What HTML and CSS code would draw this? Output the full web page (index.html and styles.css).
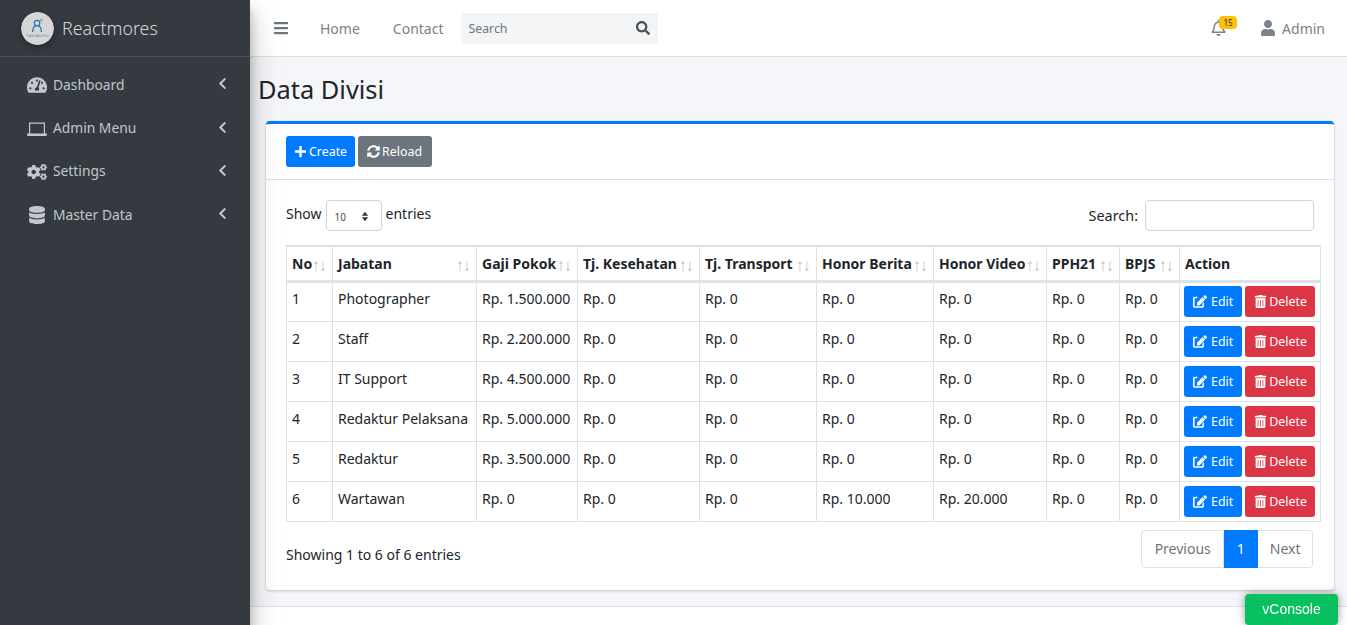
FILE: index.html
```html
<!DOCTYPE html>
<html lang="en">

<head>
    <meta charset="UTF-8">
    <meta name="viewport" content="width=device-width, initial-scale=1.0">
    <title>Data Divisi</title>
    <link rel="stylesheet" href="styles.css">
</head>

<body>
    <svg class="sprite" aria-hidden="true">
        <symbol id="i-gauge" viewBox="0 0 576 512"><path d="M288 32C128.94 32 0 160.94 0 320c0 52.8 14.25 102.26 39.06 144.8 5.61 9.62 16.3 15.2 27.44 15.2h443c11.14 0 21.83-5.58 27.44-15.2C561.75 422.26 576 372.8 576 320c0-159.06-128.94-288-288-288zm0 64c14.71 0 26.58 10.13 30.32 23.65-1.11 2.26-2.64 4.23-3.45 6.67l-9.22 27.67c-5.13 3.49-10.97 6.01-17.64 6.01-17.67 0-32-14.33-32-32S270.33 96 288 96zM96 384c-17.67 0-32-14.33-32-32s14.33-32 32-32 32 14.33 32 32-14.33 32-32 32zm48-160c-17.67 0-32-14.33-32-32s14.33-32 32-32 32 14.33 32 32-14.33 32-32 32zm246.77-72.41l-61.33 184C343.13 347.33 352 364.54 352 384c0 11.72-3.38 22.55-8.88 32H232.88c-5.5-9.45-8.88-20.28-8.88-32 0-33.94 26.5-61.43 59.9-63.59l61.34-184.01c4.17-12.56 17.73-19.45 30.36-15.17 12.57 4.19 19.35 17.79 15.17 30.36zm14.66 57.2l15.52-46.55c3.47-1.29 7.13-2.23 11.05-2.23 17.67 0 32 14.33 32 32s-14.33 32-32 32c-11.38-.01-20.89-6.28-26.57-15.22zM480 384c-17.67 0-32-14.33-32-32s14.33-32 32-32 32 14.33 32 32-14.33 32-32 32z"/></symbol>
        <symbol id="i-laptop" viewBox="0 0 20 18"><path d="M2 2.500h16v11h-1.200V3.700H3.200v9.800H2zM0 13.500h20v1c0 .8-.7 1.500-1.500 1.500h-17C.7 16 0 15.300 0 14.500z"/></symbol>
        <symbol id="i-cogs" viewBox="0 0 640 512"><path d="M512.1 191l-8.2 14.3c-3 5.3-9.4 7.5-15.1 5.4-11.8-4.4-22.6-10.7-32.1-18.6-4.6-3.8-5.8-10.5-2.8-15.7l8.2-14.3c-6.9-8-12.3-17.3-15.9-27.4h-16.5c-6 0-11.2-4.3-12.2-10.3-2-12-2.1-24.6 0-37.1 1-6 6.2-10.4 12.2-10.4h16.5c3.6-10.1 9-19.4 15.9-27.4l-8.2-14.3c-3-5.2-1.9-11.9 2.8-15.7 9.5-7.9 20.4-14.2 32.1-18.6 5.7-2.1 12.1.1 15.1 5.4l8.2 14.3c10.5-1.9 21.2-1.9 31.7 0L552 6.3c3-5.3 9.4-7.5 15.1-5.4 11.8 4.4 22.6 10.7 32.1 18.6 4.6 3.8 5.8 10.5 2.8 15.7l-8.2 14.3c6.9 8 12.3 17.3 15.9 27.4h16.5c6 0 11.2 4.3 12.2 10.3 2 12 2.1 24.6 0 37.1-1 6-6.2 10.4-12.2 10.4h-16.5c-3.6 10.1-9 19.4-15.9 27.4l8.2 14.3c3 5.2 1.9 11.9-2.8 15.7-9.5 7.9-20.4 14.2-32.1 18.6-5.7 2.1-12.1-.1-15.1-5.4l-8.2-14.3c-10.4 1.9-21.2 1.9-31.7 0zm-10.5-58.800c38.5 29.600 82.400-14.300 52.800-52.800-38.500-29.700-82.400 14.300-52.800 52.800zM386.300 286.100l33.700 16.800c10.100 5.800 14.500 18.100 10.500 29.100-8.900 24.200-26.400 46.400-42.600 65.800-7.400 8.900-20.200 11.100-30.300 5.300l-29.100-16.800c-16 13.700-34.600 24.600-54.900 31.700v33.600c0 11.600-8.300 21.600-19.700 23.600-24.600 4.200-50.400 4.400-75.900 0-11.500-2-20-11.900-20-23.600V418c-20.300-7.200-38.900-18-54.900-31.700L74 403c-10 5.800-22.900 3.600-30.300-5.300-16.200-19.400-33.300-41.600-42.200-65.700-4-10.900.4-23.200 10.500-29.100l33.300-16.800c-3.900-20.900-3.900-42.400 0-63.400L12 205.800c-10.100-5.800-14.600-18.100-10.500-29 8.900-24.200 26-46.400 42.200-65.800 7.400-8.900 20.200-11.100 30.300-5.300l29.100 16.800c16-13.700 34.600-24.600 54.900-31.700V57.100c0-11.500 8.200-21.500 19.600-23.500 24.600-4.200 50.500-4.400 76-.1 11.500 2 20 11.900 20 23.600v33.600c20.300 7.200 38.900 18 54.900 31.700l29.100-16.800c10-5.800 22.900-3.600 30.300 5.300 16.200 19.400 33.200 41.600 42.100 65.800 4 10.900.1 23.200-10 29.100l-33.700 16.800c3.900 21 3.900 42.500 0 63.500zm-117.600 21.100c59.200-77-28.700-164.900-105.700-105.700-59.200 77 28.700 164.900 105.700 105.700zm243.400 182.700l-8.200 14.300c-3 5.300-9.400 7.500-15.100 5.400-11.800-4.400-22.600-10.700-32.100-18.600-4.600-3.800-5.800-10.500-2.800-15.700l8.200-14.300c-6.900-8-12.300-17.300-15.900-27.400h-16.500c-6 0-11.200-4.300-12.200-10.300-2-12-2.100-24.600 0-37.100 1-6 6.200-10.400 12.200-10.400h16.500c3.600-10.100 9-19.400 15.900-27.400l-8.200-14.300c-3-5.200-1.900-11.900 2.800-15.700 9.500-7.900 20.400-14.200 32.100-18.600 5.700-2.100 12.100.1 15.100 5.400l8.200 14.300c10.500-1.900 21.200-1.900 31.700 0l8.200-14.300c3-5.300 9.400-7.500 15.100-5.400 11.800 4.400 22.600 10.700 32.100 18.600 4.600 3.800 5.800 10.500 2.800 15.700l-8.200 14.300c6.900 8 12.300 17.300 15.900 27.400h16.500c6 0 11.200 4.300 12.200 10.300 2 12 2.100 24.600 0 37.100-1 6-6.200 10.400-12.200 10.400h-16.500c-3.600 10.100-9 19.400-15.900 27.400l8.200 14.300c3 5.200 1.900 11.900-2.800 15.700-9.500 7.900-20.400 14.200-32.100 18.600-5.700 2.100-12.100-.1-15.100-5.400l-8.200-14.300c-10.400 1.900-21.200 1.900-31.700 0zM501.600 431c38.500 29.600 82.400-14.300 52.800-52.800-38.500-29.600-82.400 14.300-52.800 52.800z"/></symbol>
        <symbol id="i-database" viewBox="0 0 448 512"><path d="M448 73.143v45.714C448 159.143 347.667 192 224 192S0 159.143 0 118.857V73.143C0 32.857 100.333 0 224 0s224 32.857 224 73.143zM448 176v102.857C448 319.143 347.667 352 224 352S0 319.143 0 278.857V176c48.125 33.143 136.208 48.572 224 48.572S399.874 209.143 448 176zm0 160v102.857C448 479.143 347.667 512 224 512S0 479.143 0 438.857V336c48.125 33.143 136.208 48.572 224 48.572S399.874 369.143 448 336z"/></symbol>
        <symbol id="i-angle" viewBox="0 0 320 512"><path d="M34.52 239.03L228.87 44.690c9.370-9.370 24.570-9.370 33.940 0l22.670 22.670c9.360 9.360 9.370 24.520.040 33.900L131.490 256l154.020 154.750c9.340 9.380 9.320 24.540-.040 33.900l-22.670 22.670c-9.370 9.370-24.570 9.370-33.940 0L34.520 272.970c-9.370-9.370-9.370-24.570 0-33.940z"/></symbol>
        <symbol id="i-bars" viewBox="0 0 448 512"><path d="M16 132h416c8.837 0 16-7.163 16-16V76c0-8.837-7.163-16-16-16H16C7.163 60 0 67.163 0 76v40c0 8.837 7.163 16 16 16zm0 160h416c8.837 0 16-7.163 16-16v-40c0-8.837-7.163-16-16-16H16c-8.837 0-16 7.163-16 16v40c0 8.837 7.163 16 16 16zm0 160h416c8.837 0 16-7.163 16-16v-40c0-8.837-7.163-16-16-16H16c-8.837 0-16 7.163-16 16v40c0 8.837 7.163 16 16 16z"/></symbol>
        <symbol id="i-search" viewBox="0 0 512 512"><path d="M505 442.700L405.300 343c-4.500-4.500-10.600-7-17-7H372c27.600-35.300 44-79.700 44-128C416 93.100 322.900 0 208 0S0 93.100 0 208s93.100 208 208 208c48.300 0 92.700-16.400 128-44v16.300c0 6.400 2.500 12.500 7 17l99.700 99.700c9.400 9.400 24.600 9.400 33.900 0l28.300-28.300c9.400-9.400 9.400-24.600.1-34zM208 336c-70.700 0-128-57.200-128-128 0-70.700 57.200-128 128-128 70.700 0 128 57.200 128 128 0 70.700-57.200 128-128 128z"/></symbol>
        <symbol id="i-bell" viewBox="0 0 448 512"><path d="M439.390 362.290c-19.320-20.760-55.470-51.990-55.470-154.290 0-77.700-54.480-139.900-127.940-155.160V32c0-17.670-14.320-32-31.980-32s-31.980 14.330-31.980 32v20.840C118.560 68.100 64.080 130.300 64.080 208c0 102.300-36.150 133.530-55.470 154.290-6 6.450-8.660 14.160-8.610 21.710.11 16.400 12.980 32 32.100 32h383.800c19.120 0 32-15.600 32.100-32 .05-7.550-2.610-15.270-8.610-21.710zM67.530 368c21.220-27.970 44.420-74.330 44.530-159.420 0-.2-.06-.38-.06-.58 0-61.860 50.140-112 112-112s112 50.140 112 112c0 .2-.06.38-.06.58.11 85.100 23.310 131.460 44.530 159.420H67.530zM224 512c35.320 0 63.970-28.650 63.970-64H160.030c0 35.350 28.650 64 63.970 64z"/></symbol>
        <symbol id="i-user" viewBox="0 0 448 512"><path d="M224 256c70.700 0 128-57.300 128-128S294.700 0 224 0 96 57.300 96 128s57.300 128 128 128zm89.600 32h-16.700c-22.200 10.200-46.900 16-72.900 16s-50.600-5.800-72.900-16h-16.700C60.200 288 0 348.200 0 422.400V464c0 26.500 21.500 48 48 48h352c26.500 0 48-21.500 48-48v-41.600c0-74.200-60.200-134.400-134.400-134.400z"/></symbol>
        <symbol id="i-plus" viewBox="0 0 448 512"><path d="M416 208H272V64c0-17.670-14.330-32-32-32h-32c-17.670 0-32 14.330-32 32v144H32c-17.670 0-32 14.330-32 32v32c0 17.670 14.330 32 32 32h144v144c0 17.670 14.330 32 32 32h32c17.670 0 32-14.330 32-32V304h144c17.670 0 32-14.330 32-32v-32c0-17.670-14.330-32-32-32z"/></symbol>
        <symbol id="i-sync" viewBox="0 0 512 512"><path d="M370.720 133.280C339.458 104.008 298.888 87.962 255.848 88c-77.458.068-144.328 53.178-162.791 126.850-1.344 5.363-6.122 9.150-11.651 9.150H24.103c-7.498 0-13.194-6.807-11.807-14.176C33.933 94.924 134.813 8 256 8c66.448 0 126.791 26.136 171.315 68.685L463.030 40.970C478.149 25.851 504 36.559 504 57.941V192c0 13.255-10.745 24-24 24H345.941c-21.382 0-32.090-25.851-16.971-40.971l41.750-41.749zM32 296h134.059c21.382 0 32.090 25.851 16.971 40.971l-41.750 41.750c31.262 29.273 71.835 45.319 114.876 45.280 77.418-.07 144.315-53.144 162.787-126.849 1.344-5.363 6.122-9.150 11.651-9.150h57.304c7.498 0 13.194 6.807 11.807 14.176C478.067 417.076 377.187 504 256 504c-66.448 0-126.791-26.136-171.315-68.685L48.970 471.030C33.851 486.149 8 475.441 8 454.059V320c0-13.255 10.745-24 24-24z"/></symbol>
        <symbol id="i-edit" viewBox="0 0 576 512"><path d="M402.600 83.200l90.200 90.200c3.800 3.800 3.800 10 0 13.800L274.400 405.600l-92.800 10.300c-12.400 1.400-22.900-9.100-21.500-21.500l10.300-92.800L388.800 83.200c3.800-3.800 10-3.800 13.800 0zm162-22.900l-48.800-48.800c-15.200-15.200-39.900-15.200-55.200 0l-35.400 35.400c-3.800 3.800-3.800 10 0 13.800l90.200 90.200c3.800 3.800 10 3.800 13.800 0l35.400-35.400c15.200-15.300 15.200-40 0-55.200zM384 346.200V448H64V128h73.100c3.200 0 6.200-1.300 8.500-3.500l40-40c7.600-7.600 2.200-20.500-8.500-20.500H48C21.500 64 0 85.500 0 112v352c0 26.500 21.500 48 48 48h352c26.500 0 48-21.500 48-48V306.200c0-10.700-12.900-16-20.500-8.500l-40 40c-2.200 2.300-3.500 5.300-3.500 8.500z"/></symbol>
        <symbol id="i-trash" viewBox="0 0 448 512"><path d="M32 464a48 48 0 0 0 48 48h288a48 48 0 0 0 48-48V128H32zm272-256a16 16 0 0 1 32 0v224a16 16 0 0 1-32 0zm-96 0a16 16 0 0 1 32 0v224a16 16 0 0 1-32 0zm-96 0a16 16 0 0 1 32 0v224a16 16 0 0 1-32 0zM432 32H312l-9.400-18.700A24 24 0 0 0 281.100 0H166.800a23.720 23.720 0 0 0-21.400 13.300L136 32H16A16 16 0 0 0 0 48v32a16 16 0 0 0 16 16h416a16 16 0 0 0 16-16V48a16 16 0 0 0-16-16z"/></symbol>
    </svg>

    <div class="wrapper">
        <aside class="sidebar">
            <a class="brand" href="#">
                <svg class="brand-logo" viewBox="0 0 34 34">
                    <circle cx="17" cy="17" r="17" fill="#d6d6d6" />
                    <circle cx="16.500" cy="11.500" r="2.800" fill="none" stroke="#2f6db5" stroke-width="1.300" />
                    <path d="M12 20.500c0-3 1.500-5.500 3-6.500M21 20.500c0-3-1.500-5.500-3-6.500" stroke="#2f6db5" stroke-width="1.300" fill="none" />
                    <rect x="19.500" y="7" width="3" height="3" rx="1" fill="#8cc85a" />
                    <text class="brand-logo-text" x="17" y="25.500" text-anchor="middle">Tidak Ada Foto</text>
                </svg>
                <span class="brand-text">Reactmores</span>
            </a>
            <nav class="side-menu">
                <a class="side-link" href="#"><svg class="side-icon"><use href="#i-gauge" /></svg><span class="side-label">Dashboard</span><svg class="side-angle"><use href="#i-angle" /></svg></a>
                <a class="side-link" href="#"><svg class="side-icon"><use href="#i-laptop" /></svg><span class="side-label">Admin Menu</span><svg class="side-angle"><use href="#i-angle" /></svg></a>
                <a class="side-link" href="#"><svg class="side-icon"><use href="#i-cogs" /></svg><span class="side-label">Settings</span><svg class="side-angle"><use href="#i-angle" /></svg></a>
                <a class="side-link" href="#"><svg class="side-icon"><use href="#i-database" /></svg><span class="side-label">Master Data</span><svg class="side-angle"><use href="#i-angle" /></svg></a>
            </nav>
        </aside>

        <div class="main">
            <header class="navbar">
                <a class="nav-toggle" href="#"><svg class="nav-bars"><use href="#i-bars" /></svg></a>
                <a class="nav-link" href="#">Home</a>
                <a class="nav-link" href="#">Contact</a>
                <form class="nav-search">
                    <input class="nav-search-input" type="text" placeholder="Search">
                    <svg class="nav-search-icon"><use href="#i-search" /></svg>
                </form>
                <div class="nav-right">
                    <a class="nav-bell" href="#"><svg class="nav-bell-icon"><use href="#i-bell" /></svg><span class="badge">15</span></a>
                    <a class="nav-user" href="#"><svg class="nav-user-icon"><use href="#i-user" /></svg>Admin</a>
                </div>
            </header>

            <main class="content">
                <h1 class="page-title">Data Divisi</h1>
                <section class="card">
                    <div class="card-header">
                        <button class="btn btn-primary"><svg class="btn-icon"><use href="#i-plus" /></svg>Create</button>
                        <button class="btn btn-secondary"><svg class="btn-icon"><use href="#i-sync" /></svg>Reload</button>
                    </div>
                    <div class="card-body">
                        <div class="table-top">
                            <label class="table-length">Show
                                <span class="fake-select">10<svg class="select-arrows" viewBox="0 0 10 14"><path d="M5 1l4 5H1zM5 13L1 8h8z" /></svg></span>
                                entries</label>
                            <label class="table-filter">Search: <input class="filter-input" type="search"></label>
                        </div>
                        <table class="data-table">
                            <colgroup>
                                <col class="col-no">
                                <col class="col-jabatan">
                                <col class="col-gaji">
                                <col class="col-kesehatan">
                                <col class="col-transport">
                                <col class="col-berita">
                                <col class="col-video">
                                <col class="col-pph">
                                <col class="col-bpjs">
                                <col class="col-action">
                            </colgroup>
                            <thead>
                                <tr>
                                    <th class="sort">No</th>
                                    <th class="sort">Jabatan</th>
                                    <th class="sort">Gaji Pokok</th>
                                    <th class="sort">Tj. Kesehatan</th>
                                    <th class="sort">Tj. Transport</th>
                                    <th class="sort">Honor Berita</th>
                                    <th class="sort">Honor Video</th>
                                    <th class="sort">PPH21</th>
                                    <th class="sort">BPJS</th>
                                    <th>Action</th>
                                </tr>
                            </thead>
                            <tbody>
                                <tr>
                                    <td>1</td><td>Photographer</td><td>Rp. 1.500.000</td><td>Rp. 0</td><td>Rp. 0</td><td>Rp. 0</td><td>Rp. 0</td><td>Rp. 0</td><td>Rp. 0</td>
                                    <td class="actions"><button class="btn btn-primary"><svg class="btn-icon btn-icon-wide"><use href="#i-edit" /></svg>Edit</button><button class="btn btn-danger"><svg class="btn-icon"><use href="#i-trash" /></svg>Delete</button></td>
                                </tr>
                                <tr>
                                    <td>2</td><td>Staff</td><td>Rp. 2.200.000</td><td>Rp. 0</td><td>Rp. 0</td><td>Rp. 0</td><td>Rp. 0</td><td>Rp. 0</td><td>Rp. 0</td>
                                    <td class="actions"><button class="btn btn-primary"><svg class="btn-icon btn-icon-wide"><use href="#i-edit" /></svg>Edit</button><button class="btn btn-danger"><svg class="btn-icon"><use href="#i-trash" /></svg>Delete</button></td>
                                </tr>
                                <tr>
                                    <td>3</td><td>IT Support</td><td>Rp. 4.500.000</td><td>Rp. 0</td><td>Rp. 0</td><td>Rp. 0</td><td>Rp. 0</td><td>Rp. 0</td><td>Rp. 0</td>
                                    <td class="actions"><button class="btn btn-primary"><svg class="btn-icon btn-icon-wide"><use href="#i-edit" /></svg>Edit</button><button class="btn btn-danger"><svg class="btn-icon"><use href="#i-trash" /></svg>Delete</button></td>
                                </tr>
                                <tr>
                                    <td>4</td><td>Redaktur Pelaksana</td><td>Rp. 5.000.000</td><td>Rp. 0</td><td>Rp. 0</td><td>Rp. 0</td><td>Rp. 0</td><td>Rp. 0</td><td>Rp. 0</td>
                                    <td class="actions"><button class="btn btn-primary"><svg class="btn-icon btn-icon-wide"><use href="#i-edit" /></svg>Edit</button><button class="btn btn-danger"><svg class="btn-icon"><use href="#i-trash" /></svg>Delete</button></td>
                                </tr>
                                <tr>
                                    <td>5</td><td>Redaktur</td><td>Rp. 3.500.000</td><td>Rp. 0</td><td>Rp. 0</td><td>Rp. 0</td><td>Rp. 0</td><td>Rp. 0</td><td>Rp. 0</td>
                                    <td class="actions"><button class="btn btn-primary"><svg class="btn-icon btn-icon-wide"><use href="#i-edit" /></svg>Edit</button><button class="btn btn-danger"><svg class="btn-icon"><use href="#i-trash" /></svg>Delete</button></td>
                                </tr>
                                <tr>
                                    <td>6</td><td>Wartawan</td><td>Rp. 0</td><td>Rp. 0</td><td>Rp. 0</td><td>Rp. 10.000</td><td>Rp. 20.000</td><td>Rp. 0</td><td>Rp. 0</td>
                                    <td class="actions"><button class="btn btn-primary"><svg class="btn-icon btn-icon-wide"><use href="#i-edit" /></svg>Edit</button><button class="btn btn-danger"><svg class="btn-icon"><use href="#i-trash" /></svg>Delete</button></td>
                                </tr>
                            </tbody>
                        </table>
                        <div class="table-bottom">
                            <div class="table-info">Showing 1 to 6 of 6 entries</div>
                            <ul class="pagination">
                                <li class="page-item">Previous</li>
                                <li class="page-item active">1</li>
                                <li class="page-item">Next</li>
                            </ul>
                        </div>
                    </div>
                </section>
            </main>

            <footer class="footer"></footer>
        </div>
    </div>

    <div class="vconsole">vConsole</div>
</body>

</html>
```

FILE: styles.css
```css
*,
::before,
::after {
    box-sizing: border-box;
}

html,
body {
    margin: 0;
    padding: 0;
    height: 100%;
    overflow: hidden;
    font-family: 'Noto Sans', sans-serif;
    font-size: 14px;
    line-height: 1.5;
    color: #212529;
    background-color: #f4f6f9;
}

a {
    text-decoration: none;
    color: inherit;
}

svg {
    fill: currentColor;
}

.sprite {
    display: none;
}

.wrapper {
    display: flex;
    height: 100vh;
}

/* sidebar */
.sidebar {
    flex: 0 0 250px;
    position: relative;
    z-index: 2;
    color: #c2c7d0;
    background-color: #343a40;
    box-shadow: 0 14px 28px rgba(0, 0, 0, .25), 0 10px 10px rgba(0, 0, 0, .22);
}

.brand {
    display: flex;
    align-items: center;
    height: 57px;
    padding: 0 21px;
    border-bottom: 1px solid #4b545c;
}

.brand-logo {
    width: 33px;
    height: 33px;
    border-radius: 50%;
    box-shadow: 0 3px 6px rgba(0, 0, 0, .3);
}

.brand-logo-text {
    font-size: 3.400px;
    fill: #5b7fa8;
}

.brand-text {
    margin-left: 8px;
    font-size: 17.800px;
    font-weight: 300;
    color: rgba(255, 255, 255, .8);
}

.side-menu {
    display: flex;
    flex-direction: column;
    padding-top: 6.600px;
    font-size: 13.800px;
}

.side-link {
    display: flex;
    align-items: center;
    height: 43.300px;
    padding: 0 23px 0 27px;
}

.side-icon {
    width: 20px;
    height: 18px;
    margin-right: 6px;
}

.side-label {
    flex: 1;
}

.side-angle {
    width: 9px;
    height: 13px;
    margin-bottom: 3px;
}

/* main */
.main {
    flex: 1;
    min-width: 0;
    display: flex;
    flex-direction: column;
}

.navbar {
    display: flex;
    align-items: center;
    height: 57px;
    padding-left: 24px;
    color: #7a828a;
    background-color: #fff;
    border-bottom: 1px solid #dee2e6;
}

.nav-toggle {
    display: flex;
    margin-right: 32px;
}

.nav-bars {
    width: 14px;
    height: 16px;
    color: #6c757d;
}

.nav-link {
    margin-right: 33px;
}

.nav-link:nth-child(3) {
    margin-right: 17px;
}

.nav-search {
    display: flex;
    align-items: center;
    width: 197px;
    height: 31px;
    padding: 0 8px;
    border-radius: 3px;
    background-color: #f2f4f6;
}

.nav-search-input {
    flex: 1;
    min-width: 0;
    padding: 0;
    border: none;
    outline: none;
    font-family: inherit;
    font-size: 12.300px;
    background: transparent;
}

.nav-search-input::placeholder {
    color: #6c757d;
    opacity: 1;
}

.nav-search-icon {
    width: 14px;
    height: 14px;
    color: #495057;
}

.nav-right {
    display: flex;
    align-items: center;
    margin-left: auto;
    padding-right: 22px;
}

.nav-bell {
    position: relative;
    display: flex;
    margin-right: 35px;
}

.nav-bell-icon {
    width: 15px;
    height: 16px;
}

.badge {
    position: absolute;
    top: -4px;
    left: 8px;
    width: 18px;
    height: 13px;
    border-radius: 4px;
    font-size: 8px;
    line-height: 13px;
    text-align: center;
    color: #1f2d3d;
    background-color: #ffc107;
}

.nav-user {
    display: flex;
    align-items: center;
}

.nav-user-icon {
    width: 14px;
    height: 16px;
    margin-right: 7px;
}

.content {
    flex: 1;
    min-height: 0;
    padding: 0 13px 0 9px;
}

.page-title {
    margin: 14px 0 14px -1px;
    font-size: 25.400px;
    font-weight: 400;
    line-height: 36px;
    color: #212529;
}

.card {
    margin-left: 7px;
    height: 469px;
    background-color: #fff;
    border-top: 3px solid #007bff;
    border-radius: 4px;
    box-shadow: 0 0 1px rgba(0, 0, 0, .13), 0 1px 3px rgba(0, 0, 0, .2);
}

.card-header {
    display: flex;
    gap: 3px;
    height: 56px;
    padding: 12px 20px;
    border-bottom: 1px solid rgba(0, 0, 0, .125);
}

.card-header .btn-primary {
    padding: 0 8px 1px;
}

.card-body {
    padding: 20px 14px 0 20px;
}

.btn {
    display: inline-flex;
    align-items: center;
    justify-content: center;
    height: 31px;
    padding: 0 9px 1px;
    border: none;
    border-radius: 3px;
    font-family: inherit;
    font-size: 12.400px;
    color: #fff;
    cursor: pointer;
}

.btn-primary {
    background-color: #007bff;
}

.btn-secondary {
    padding: 0 10px 1px 9px;
    background-color: #6c757d;
}

.btn-danger {
    padding: 0 8px 1px 9px;
    background-color: #dc3545;
}

.btn-icon {
    width: 13px;
    height: 13px;
    margin-right: 2px;
}

.btn-icon-wide {
    width: 14px;
    margin-right: 4px;
}

.table-top {
    display: flex;
    align-items: flex-start;
    justify-content: space-between;
    height: 31px;
    padding-right: 6px;
}

.table-length {
    display: flex;
    align-items: flex-start;
    gap: 4px;
    line-height: 28px;
}

.table-filter {
    display: flex;
    align-items: center;
    gap: 7px;
    font-size: 14.400px;
}

.fake-select {
    display: flex;
    align-items: center;
    justify-content: space-between;
    width: 56px;
    height: 31px;
    padding: 2px 12px 0 8px;
    border: 1px solid #ced4da;
    border-radius: 4px;
    font-size: 10px;
    color: #495057;
    background-color: #fff;
}

.select-arrows {
    width: 8px;
    height: 11px;
    color: #343a40;
}

.filter-input {
    width: 169px;
    height: 31px;
    border: 1px solid #ced4da;
    border-radius: 4px;
    outline: none;
}

/* table */
.data-table {
    width: 1034px;
    margin-top: 14px;
    table-layout: fixed;
    border-collapse: collapse;
}

.col-no { width: 46px; }
.col-jabatan { width: 144px; }
.col-gaji { width: 101px; }
.col-kesehatan { width: 122px; }
.col-transport { width: 117px; }
.col-berita { width: 117px; }
.col-video { width: 113px; }
.col-pph { width: 73px; }
.col-bpjs { width: 60px; }
.col-action { width: 141px; }

.data-table th,
.data-table td {
    padding: 0 5px;
    border: 1px solid #dee2e6;
    white-space: nowrap;
    text-align: left;
}

.data-table th {
    height: 35px;
    font-weight: 700;
    font-size: 14px;
    border-top-width: 2px;
    border-bottom-width: 3px;
}

.data-table td {
    height: 40px;
    padding-bottom: 6px;
}

.data-table td.actions {
    padding: 4px 4px 0;
    vertical-align: top;
}

.data-table tbody tr:first-child td.actions {
    padding-top: 3px;
}

.actions .btn {
    margin-right: 3px;
    padding-bottom: 0;
    vertical-align: top;
}

.sort {
    position: relative;
}

.sort::before,
.sort::after {
    position: absolute;
    top: 6px;
    font-family: 'Liberation Sans', sans-serif;
    font-size: 17px;
    font-weight: 400;
    opacity: .3;
}

.sort::before {
    content: "\2191";
    right: 12px;
}

.sort::after {
    content: "\2193";
    right: 5px;
}

.table-bottom {
    display: flex;
    align-items: flex-start;
    justify-content: space-between;
    margin-top: 8px;
    padding-right: 7px;
}

.table-info {
    padding-top: 14px;
}

.pagination {
    display: flex;
    margin: 0;
    padding: 0;
    list-style: none;
}

.page-item {
    display: flex;
    align-items: center;
    height: 38px;
    padding: 0 12.500px;
    color: #6c757d;
    background-color: #fff;
    border: 1px solid #dee2e6;
    border-left-width: 0;
}

.page-item:first-child {
    border-left-width: 1px;
    border-radius: 4px 0 0 4px;
}

.page-item:last-child {
    padding: 0 11.500px;
    border-radius: 0 4px 4px 0;
}

.page-item.active {
    color: #fff;
    background-color: #007bff;
    border-color: #007bff;
}

.footer {
    flex: 0 0 19px;
    background-color: #fff;
    border-top: 1px solid #dee2e6;
}

.vconsole {
    position: fixed;
    right: 9px;
    bottom: 0;
    z-index: 3;
    width: 93px;
    height: 31px;
    border-radius: 4px;
    font-family: 'Liberation Sans', sans-serif;
    font-size: 14px;
    line-height: 30px;
    text-align: center;
    color: #fff;
    background-color: #07c160;
    box-shadow: 0 0 8px rgba(0, 0, 0, .4);
}
```
